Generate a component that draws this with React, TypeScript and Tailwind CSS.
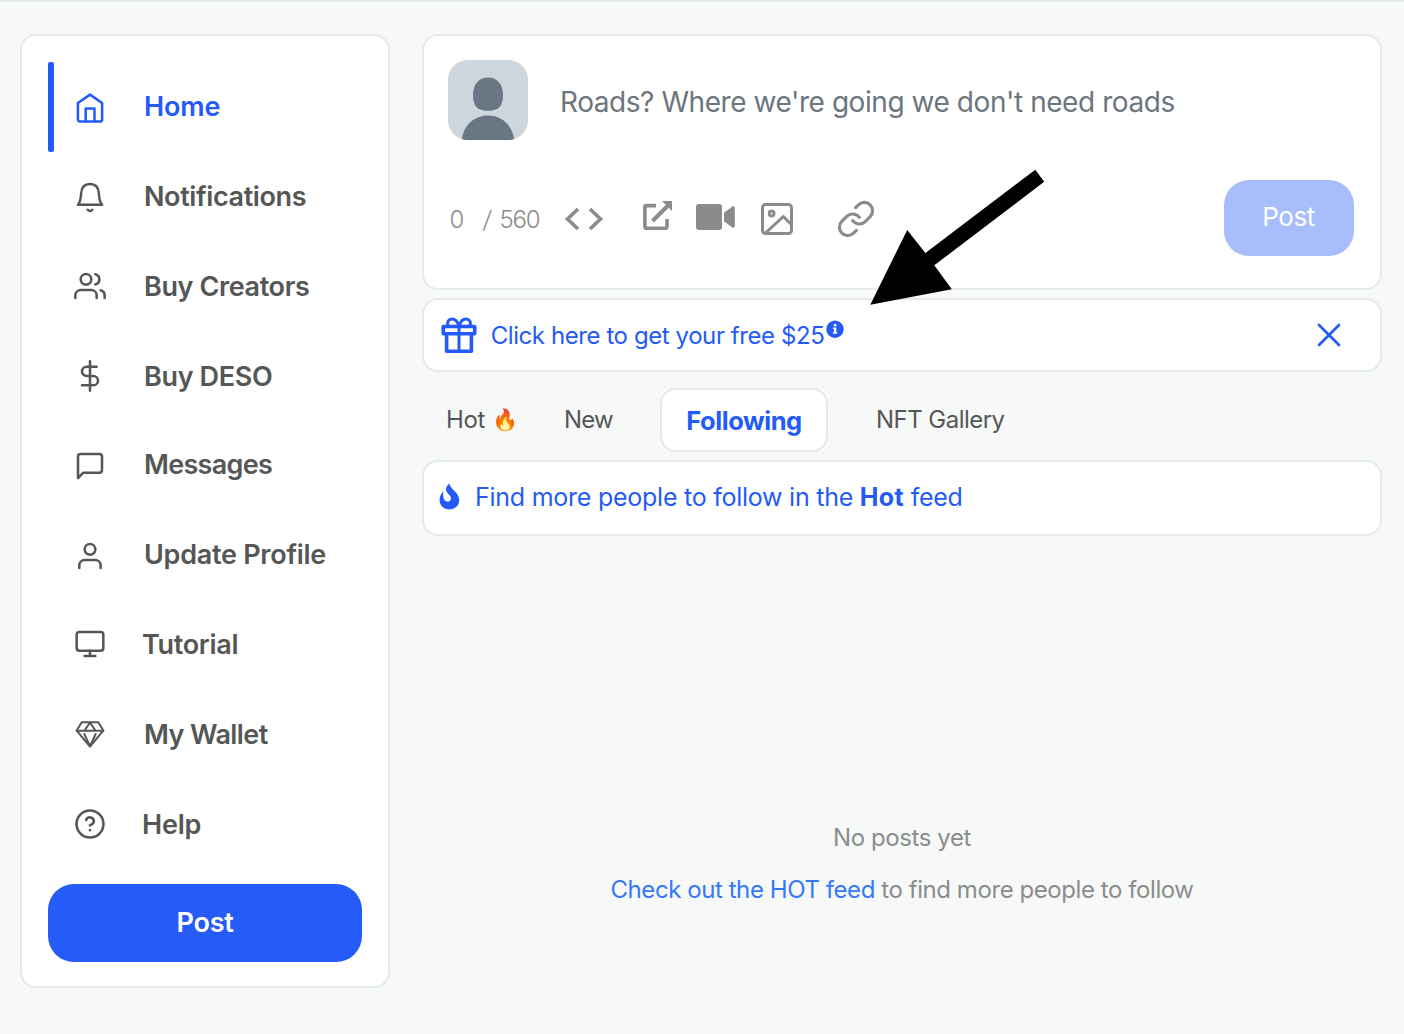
import type { ReactNode } from "react";

type NavItem = { label: string; text: string; row: string; iconPos: string; icon: ReactNode; active?: boolean };

/* Places a 24-unit outline drawing in the middle of the 36px icon box. */
function Outline({ children }: { children: ReactNode }) {
  return (
    <g transform="translate(2 2) scale(1.3333)" strokeWidth={1.9}>
      {children}
    </g>
  );
}

const nav: NavItem[] = [
  {
    label: "Home",
    active: true,
    text: "ml-9 tracking-[-0.15px]",
    row: "h-[90px]",
    iconPos: "mt-px",
    icon: (
      <>
        <path d="M18 5.6 30.1 14V30.6a1.9 1.9 0 0 1-1.9 1.9H7.8a1.9 1.9 0 0 1-1.9-1.9V14z" />
        <path d="M13.7 32.3V19.4h8.800v12.900" />
      </>
    ),
  },
  {
    label: "Notifications",
    text: "ml-9 tracking-[-0.39px]",
    row: "h-[90px]",
    iconPos: "mt-px",
    icon: (
      <>
        <path d="M5.9 25.8h24.2c-2.7-2.6-3-6.6-3.3-11.8-.4-6-3.9-9-8.8-9S9.600 8 9.200 14c-.3 5.200-.6 9.200-3.300 11.800z" />
        <path d="M15.700 30.700a2.700 2.700 0 0 0 4.600 0" />
      </>
    ),
  },
  {
    label: "Buy Creators",
    text: "ml-9 tracking-[-0.38px]",
    row: "h-[90px]",
    iconPos: "",
    icon: (
      <Outline>
        <path d="M17 21v-2a4 4 0 0 0-4-4H5a4 4 0 0 0-4 4v2" />
        <circle cx="9" cy="7" r="4" />
        <path d="M23 21v-2a4 4 0 0 0-3-3.87" />
        <path d="M16 3.13a4 4 0 0 1 0 7.75" />
      </Outline>
    ),
  },
  {
    label: "Buy DESO",
    text: "ml-9 tracking-[-0.35px]",
    row: "h-[88px]",
    iconPos: "",
    icon: (
      <Outline>
        <path d="M12 1v22" />
        <path d="M17 5H9.500a3.500 3.500 0 0 0 0 7h5a3.500 3.500 0 0 1 0 7H6" />
      </Outline>
    ),
  },
  {
    label: "Messages",
    text: "ml-9 tracking-[-0.7px]",
    row: "h-[90px]",
    iconPos: "mt-[2px]",
    icon: (
      <Outline>
        <path d="M21 15a2 2 0 0 1-2 2H7l-4 4V5a2 2 0 0 1 2-2h14a2 2 0 0 1 2 2z" />
      </Outline>
    ),
  },
  {
    label: "Update Profile",
    text: "ml-9 tracking-[-0.27px]",
    row: "h-[90px]",
    iconPos: "mt-[2px]",
    icon: (
      <Outline>
        <path d="M20 21v-2a4 4 0 0 0-4-4H8a4 4 0 0 0-4 4v2" />
        <circle cx="12" cy="7" r="4" />
      </Outline>
    ),
  },
  {
    label: "Tutorial",
    text: "ml-[34px] tracking-[-0.3px]",
    row: "h-[90px]",
    iconPos: "",
    icon: (
      <Outline>
        <rect x="2" y="3" width="20" height="14" rx="2" />
        <path d="M8 21h8M12 17v4" />
      </Outline>
    ),
  },
  {
    label: "My Wallet",
    text: "ml-9 tracking-[-0.6px]",
    row: "h-[90px]",
    iconPos: "mt-px",
    icon: (
      <g strokeWidth={2}>
        <path d="M9.700 5.300h16.600l5 8.300L18 29.500 4.700 13.600z" />
        <path d="M4.700 13.800h26.600M12.500 13.600 18 5.500l5.500 8.100M12.300 17 18 29.200 23.700 17" />
      </g>
    ),
  },
  {
    label: "Help",
    text: "ml-[34px] tracking-[-0.2px]",
    row: "h-[90px]",
    iconPos: "",
    icon: (
      <Outline>
        <circle cx="12" cy="12" r="10.1" />
        <path d="M9.090 9a3 3 0 0 1 5.830 1c0 2-3 3-3 3" />
        <path d="M12 16.600h.01" />
      </Outline>
    ),
  },
];

function Sidebar() {
  return (
    <aside className="mt-[34px] ml-5 flex h-[954px] w-[370px] shrink-0 flex-col rounded-2xl border-2 border-[#e4ebea] bg-white px-[26px] pt-[26px]">
      <nav>
        {nav.map((item) => (
          <a key={item.label} className={`flex ${item.row} ${item.active ? "text-[#245bf8]" : "text-[#555756]"}`}>
            <span className={`h-full w-[6px] rounded-[2px] ${item.active ? "bg-[#245bf8]" : "bg-transparent"}`} />
            <span className="flex items-start pt-[26px] pl-[18px]">
              <svg
                className={`size-9 shrink-0 ${item.iconPos}`}
                viewBox="0 0 36 36"
                fill="none"
                stroke="currentColor"
                strokeWidth={2.5}
                strokeLinecap="round"
                strokeLinejoin="round"
              >
                {item.icon}
              </svg>
              <span className={`text-[27px] leading-[38px] font-[620] whitespace-nowrap ${item.text}`}>{item.label}</span>
            </span>
          </a>
        ))}
      </nav>
      <button className="mt-[14px] h-[78px] w-full rounded-[26px] bg-[#255bf7] pt-px text-[27px] font-[620] tracking-[-0.3px] text-white">
        Post
      </button>
    </aside>
  );
}

function Composer() {
  return (
    <section className="h-64 rounded-2xl border-2 border-[#e4ebea] bg-white px-6 pt-6">
      <div className="flex">
        <svg className="size-20 rounded-[20px]" viewBox="0 0 80 80">
          <rect width="80" height="80" fill="#cdd5dd" />
          <path d="M40 17.500c9.500 0 15 7.500 15 17.500 0 11-4 15.700-15 15.700S25 46 25 35c0-10 5.500-17.500 15-17.500z" fill="#697785" />
          <path d="M13.800 80C15.500 65 26.500 55.600 40 55.600S64.500 65 66.200 80z" fill="#697785" />
        </svg>
        <p className="mt-[23px] ml-8 text-[28px] leading-[38px] tracking-[-0.44px] whitespace-nowrap text-[#6d757d]">
          Roads? Where we&apos;re going we don&apos;t need roads
        </p>
      </div>
      <div className="mt-10 flex h-[76px] items-center text-[#8a8b8a]">
        <span className="mt-[3px] flex pl-[1.5px] text-2xl font-[340]">
          <span className="w-[33px]">0</span>
          <span className="w-[17px] -skew-x-6">/</span>
          <span className="w-[64.5px] tracking-[-1.2px]">560</span>
        </span>
        <svg className="h-10 w-10" viewBox="564 198 40 40" fill="none" stroke="currentColor" strokeWidth={3.6}>
          <path d="M578 209 567.500 219 578 229M590 209 600.500 219 590 229" />
        </svg>
        <svg className="ml-[38px] h-10 w-8" viewBox="642 198 32 40" fill="none" stroke="currentColor" strokeWidth={3.6}>
          <path d="M656 205.600H646.400a1.500 1.500 0 0 0-1.500 1.500V226.800a1.500 1.500 0 0 0 1.500 1.500H665.500a1.500 1.500 0 0 0 1.500-1.500V219" />
          <path d="M652.500 221 667.500 206" strokeWidth={4} />
          <path d="M662 201h10v10z" fill="currentColor" stroke="none" />
        </svg>
        <svg className="ml-[21px] h-10 w-[42px]" viewBox="695 198 42 40" fill="currentColor">
          <rect x="696" y="204" width="26" height="26" rx="3" />
          <path d="M724 212.800 732 206.800c1.300-.9 2.800-.4 2.800 1.200v18c0 1.600-1.500 2.100-2.800 1.200l-8-6z" />
        </svg>
        <svg className="ml-[23px] h-10 w-9" viewBox="760 198 36 40" fill="none" stroke="currentColor" strokeWidth={3} strokeLinejoin="round">
          <rect x="762.500" y="204.600" width="29" height="29" rx="3" />
          <circle cx="771.600" cy="213.500" r="2.400" />
          <path d="M765.500 233 783.400 216.500 791.500 224.800" />
        </svg>
        <svg
          className="ml-10 h-10 w-10"
          viewBox="0 0 24 24"
          fill="none"
          stroke="currentColor"
          strokeWidth={1.9}
          strokeLinecap="round"
          strokeLinejoin="round"
        >
          <g transform="translate(0 .6)">
            <path d="M10 13a5 5 0 0 0 7.540.54l3-3a5 5 0 0 0-7.070-7.070l-1.720 1.710" />
            <path d="M14 11a5 5 0 0 0-7.540-.54l-3 3a5 5 0 0 0 7.070 7.070l1.710-1.710" />
          </g>
        </svg>
        <button className="mr-[2px] ml-auto h-[76px] w-[130px] rounded-[25px] bg-[#a8bdfc] pr-px pb-[3px] text-[26px] tracking-[-0.46px] text-white">
          Post
        </button>
      </div>
    </section>
  );
}

function Promo() {
  return (
    <section className="mt-2 flex h-[74px] items-center rounded-2xl border-2 border-[#e4ebea] bg-white pr-[38px] pl-4 text-[#245bf8]">
      <svg className="size-[38px]" viewBox="440 316 38 38" fill="none" stroke="currentColor" strokeWidth={3.6} strokeLinejoin="round">
        <rect x="443.300" y="326.500" width="31.400" height="7.200" />
        <path d="M446.600 334V351.300H471.400V334" />
        <path d="M459 326V351" strokeWidth={3} />
        <path d="M459 326.200C457.500 321.500 455.300 319 452.300 319 449.300 319 447.600 321 447.600 323.200 447.600 325 448.500 326 449.600 326.500M459 326.200C460.500 321.500 462.700 319 465.700 319 468.700 319 470.400 321 470.400 323.200 470.400 325 469.500 326 468.400 326.500" strokeWidth={3} />
      </svg>
      <span className="mt-[2px] ml-[12.700px] text-2xl tracking-[-0.42px] whitespace-nowrap">Click here to get your free $25</span>
      <svg className="mt-[19px] ml-px size-5 self-start" viewBox="0 0 20 20">
        <circle cx="10" cy="10.200" r="8.700" fill="currentColor" />
        <path d="M8 8.500h3.300v4.800H12.200v1.500H7.900v-1.500h1V10H8z" fill="white" />
        <circle cx="10.100" cy="6.200" r="1.400" fill="white" />
      </svg>
      <svg className="ml-auto size-[26px]" viewBox="1316 322 26 26" fill="none" stroke="currentColor" strokeWidth={2.700} strokeLinecap="round">
        <path d="M1319 325 1339 345M1339 325 1319 345" />
      </svg>
    </section>
  );
}

function Tabs() {
  return (
    <div className="mt-4 flex h-16 items-center pl-6 text-2xl whitespace-nowrap text-[#555756]">
      <span className="flex w-[118px] items-center tracking-[-0.36px]">
        Hot<span className="ml-[7px] text-[21px] leading-8 tracking-normal">🔥</span>
      </span>
      <span className="w-24 tracking-[-0.8px]">New</span>
      <span className="flex h-16 w-[168px] items-center justify-center rounded-2xl border-2 border-[#e4ebea] bg-white pt-[2px] text-[25.500px] font-[680] tracking-[-0.45px] text-[#245bf8]">
        Following
      </span>
      <span className="ml-12 tracking-[-0.54px]">NFT Gallery</span>
    </div>
  );
}

export default function App() {
  return (
    <div className="relative flex h-[1034px] w-[1404px] overflow-hidden bg-[#f7f9f8] font-['Inter',sans-serif] shadow-[inset_0_2px_0_#e4ebea]">
      <Sidebar />
      <main className="mt-[34px] ml-8 w-[960px]">
        <Composer />
        <Promo />
        <Tabs />
        <section className="mt-2 flex h-[76px] items-center rounded-2xl border-2 border-[#e4ebea] bg-white pl-[14px] text-[#245bf8]">
          <svg className="mb-1 h-[30px] w-6" viewBox="438 481 24 30" fill="currentColor">
            <path d="M449.300 483.300C450 489.500 459.200 492 459.200 500.200 459.200 506 454.500 509.400 449.300 509.400 443.800 509.400 439.600 505.600 439.600 500 439.600 496.500 441 493.500 443.300 491.400 442.800 496 443.500 501.200 447.400 501.600 450.600 501.800 451.800 498.800 450.300 496.300 448.300 493.300 445.600 492 446 488.800 446.300 486.500 448 485 449.300 483.300z" />
          </svg>
          <span className="ml-[13px] text-[25px] tracking-[-0.25px] whitespace-nowrap">
            Find more people to follow in the <b className="tracking-[0.3px]">Hot</b> feed
          </span>
        </section>
        <div className="mt-[276px] text-center text-2xl leading-[52px] tracking-[-0.4px] text-[#8b8d8c]">
          <p>No posts yet</p>
          <p className="tracking-[-0.43px]">
            <a className="text-[#3578f9]">Check out the HOT feed</a> to find more people to follow
          </p>
        </div>
      </main>
      <svg className="pointer-events-none absolute top-[168px] left-[868px] h-[138px] w-[178px]" viewBox="868 168 178 138">
        <path d="M870.300 304.700 907.200 230 925.400 253 1035.300 169.700 1044.200 181.700 934.300 265.300 951.800 289.300z" fill="black" />
      </svg>
    </div>
  );
}
